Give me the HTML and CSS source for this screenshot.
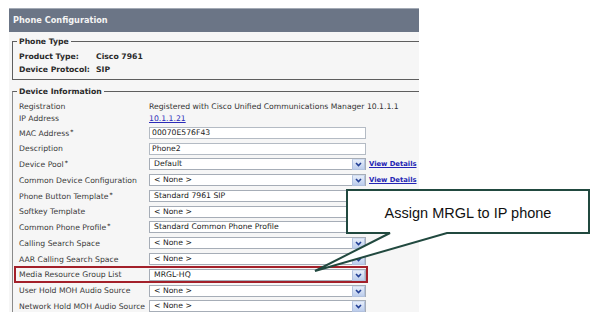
FILE: index.html
```html
<!DOCTYPE html>
<html lang="en">
<head>
    <meta charset="UTF-8">
    <title>Phone Configuration</title>
    <link rel="stylesheet" href="styles.css">
</head>
<body>
    <div class="panel">
        <div class="panel-title">Phone Configuration</div>
        <div class="panel-body">
            <div class="group">
                <div class="group-title">Phone Type</div>
                <div class="info-list">
                    <div class="info-row"><span class="info-label">Product Type:</span><span>Cisco 7961</span></div>
                    <div class="info-row"><span class="info-label">Device Protocol:</span><span>SIP</span></div>
                </div>
            </div>

            <div class="group group-device">
                <div class="group-title">Device Information</div>
                <div class="field-list">
                    <div class="text-row"><span class="label">Registration</span><span>Registered with Cisco Unified Communications Manager 10.1.1.1</span></div>
                    <div class="text-row"><span class="label">IP Address</span><a class="ip-link" href="#">10.1.1.21</a></div>
                    <div class="field-row">
                        <span class="label">MAC Address<sup>*</sup></span>
                        <div class="input">00070E576F43</div>
                    </div>
                    <div class="field-row">
                        <span class="label">Description</span>
                        <div class="input">Phone2</div>
                    </div>
                    <div class="field-row">
                        <span class="label">Device Pool<sup>*</sup></span>
                        <div class="select"><span>Default</span><span class="arrow"></span></div>
                        <a class="details" href="#">View Details</a>
                    </div>
                    <div class="field-row">
                        <span class="label">Common Device Configuration</span>
                        <div class="select"><span>&lt; None &gt;</span><span class="arrow"></span></div>
                        <a class="details" href="#">View Details</a>
                    </div>
                    <div class="field-row">
                        <span class="label">Phone Button Template<sup>*</sup></span>
                        <div class="select"><span>Standard 7961 SIP</span><span class="arrow"></span></div>
                    </div>
                    <div class="field-row">
                        <span class="label">Softkey Template</span>
                        <div class="select"><span>&lt; None &gt;</span><span class="arrow"></span></div>
                    </div>
                    <div class="field-row">
                        <span class="label">Common Phone Profile<sup>*</sup></span>
                        <div class="select"><span>Standard Common Phone Profile</span><span class="arrow"></span></div>
                    </div>
                    <div class="field-row">
                        <span class="label">Calling Search Space</span>
                        <div class="select"><span>&lt; None &gt;</span><span class="arrow"></span></div>
                    </div>
                    <div class="field-row">
                        <span class="label">AAR Calling Search Space</span>
                        <div class="select"><span>&lt; None &gt;</span><span class="arrow"></span></div>
                    </div>
                    <div class="field-row highlight">
                        <span class="label">Media Resource Group List</span>
                        <div class="select"><span>MRGL-HQ</span><span class="arrow"></span></div>
                    </div>
                    <div class="field-row">
                        <span class="label">User Hold MOH Audio Source</span>
                        <div class="select"><span>&lt; None &gt;</span><span class="arrow"></span></div>
                    </div>
                    <div class="field-row">
                        <span class="label">Network Hold MOH Audio Source</span>
                        <div class="select"><span>&lt; None &gt;</span><span class="arrow"></span></div>
                    </div>
                </div>
            </div>
        </div>
    </div>

    <!-- callout over the form -->
    <svg class="callout" width="597" height="324" viewBox="0 0 597 324">
        <path d="M347 190 H589 V233 H447 L315 271 L390 233 H347 Z" fill="#fff" stroke="#21493f" stroke-width="2" stroke-linejoin="miter"/>
        <text x="468" y="218" text-anchor="middle">Assign MRGL to IP phone</text>
    </svg>
</body>
</html>
```

FILE: styles.css
```css
body {
    margin: 0;
    background-color: #fff;
    font-family: "DejaVu Sans", Verdana, sans-serif;
    font-size: 7.7px;
    color: #333;
}
.panel {
    width: 410px;
    height: 304px;
    margin: 8px 0 0 9px;
    background-color: #f6f6f6;
    overflow: hidden;
}
.panel-title {
    height: 23px;
    line-height: 23px;
    padding-left: 4px;
    border-top: 1px solid #a3aab5;
    background-color: #6b7586;
    color: #f4f4f4;
    font-weight: bold;
    font-size: 8.2px;
}
.panel-body {
    padding: 9px 0 0 3px;
}
.group {
    border: 1px solid #5e5e5e;
    border-right: none;
    padding: 0 0 3px 6px;
}
.group-device {
    margin-top: 11px;
    border-bottom: none;
    border-left-color: #8a8a8a;
}
.group-title {
    width: fit-content;
    margin: -6px 0 0 -2px;
    padding: 0 2px;
    line-height: 12px;
    background-color: #f6f6f6;
    font-weight: bold;
    color: #2a2a2a;
}
.info-list {
    padding-top: 2px;
}
.info-row {
    display: flex;
    line-height: 13px;
    font-weight: bold;
    color: #2a2a2a;
}
.info-label {
    width: 77px;
}
.field-list {
    padding-top: 3px;
}
.text-row {
    display: flex;
    height: 12px;
    line-height: 12px;
    white-space: nowrap;
}
.label {
    width: 130px;
    flex-shrink: 0;
    color: #3a3a3a;
    white-space: nowrap;
}
.label sup {
    font-size: 6px;
    font-weight: bold;
    vertical-align: 2px;
    margin-left: 1px;
}
.ip-link {
    color: #2b2bb8;
}
.field-row {
    position: relative;
    display: flex;
    align-items: center;
    height: 15.77px;
}
.input,
.select {
    flex-shrink: 0;
    box-sizing: border-box;
    width: 217px;
    height: 12px;
    line-height: 10px;
    border: 1px solid #b4bbc4;
    background-color: #fff;
    color: #222;
    white-space: nowrap;
}
.input {
    padding-left: 2px;
}
.select {
    display: flex;
    justify-content: space-between;
    padding-left: 4px;
    border-color: #a6adb7;
}
.arrow {
    width: 11px;
    height: 9px;
    border: 1px solid #b2c2df;
    border-top-color: #d2ddf0;
    background-image: url("data:image/svg+xml;utf8,<svg xmlns='http://www.w3.org/2000/svg' width='11' height='9'><polyline points='3,3 5.5,5.5 8,3' fill='none' stroke='%23223f95' stroke-width='1.6'/></svg>"), linear-gradient(#e6edf9, #bccdec);
}
.details {
    flex-shrink: 0;
    margin-left: 3px;
    color: #2323b4;
    font-weight: bold;
    font-size: 6.8px;
    white-space: nowrap;
}
.highlight::before {
    content: "";
    position: absolute;
    left: -5px;
    top: -1px;
    width: 354px;
    height: 17px;
    box-sizing: border-box;
    border: 2px solid #a3202a;
}
.callout {
    position: absolute;
    left: 0;
    top: 0;
    pointer-events: none;
}
.callout text {
    font-family: "Liberation Sans", Arial, sans-serif;
    font-size: 14.5px;
    fill: #111;
}
```
